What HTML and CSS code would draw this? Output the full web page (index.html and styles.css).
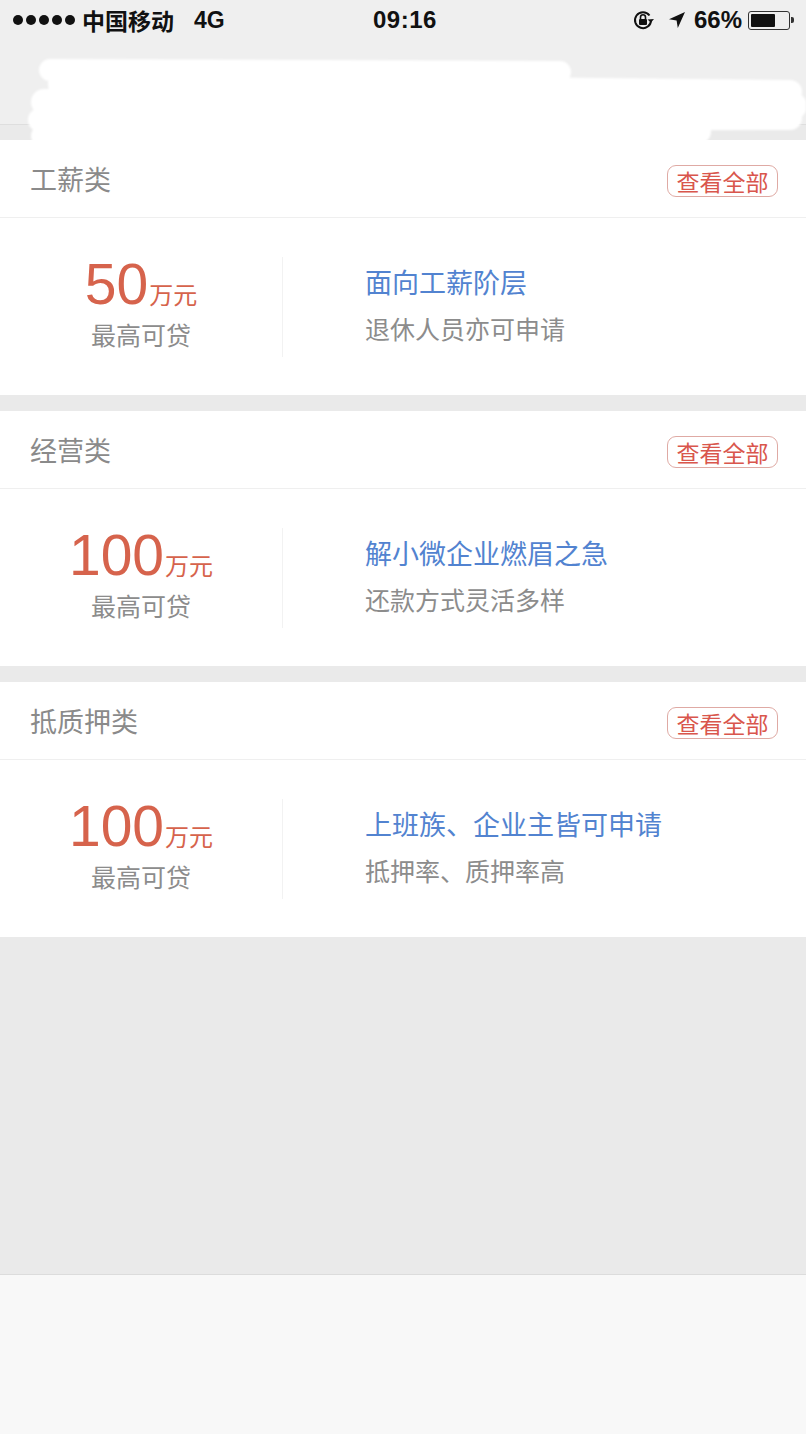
FILE: index.html
```html
<!DOCTYPE html>
<html lang="zh-CN">

    <head>
        <meta charset="UTF-8">
        <meta name="viewport"
            content="width=device-width,initial-scale=1.0">
        <title>贷款分类</title>
        <link rel="stylesheet" href="styles.css">
    </head>

    <body>
        <div class="statusbar">
            <div class="sb-left">
                <span class="dots"><i></i><i></i><i></i><i></i><i></i></span>
                <span>中国移动</span>
                <span class="net">4G</span>
            </div>
            <div class="sb-time">09:16</div>
            <div class="sb-right">
                <svg class="ic-lock" width="22" height="22" viewBox="0 0 22 22">
                    <path d="M17.5 6.5A8 8 0 1 0 19 11" fill="none" stroke="#111" stroke-width="2"/>
                    <path d="M15.5 10.5l3.5 3 3-3.6z" fill="#111"/>
                    <rect x="7" y="10" width="8" height="6" rx="1" fill="#111"/>
                    <path d="M8.5 10V8.3a2.5 2.5 0 0 1 5 0V10" fill="none" stroke="#111" stroke-width="1.6"/>
                </svg>
                <svg class="ic-loc" width="18" height="18" viewBox="0 0 18 18">
                    <path d="M17 1L1 8.2l7.6 1.2L9.8 17z" fill="#111"/>
                </svg>
                <span class="pct">66%</span>
                <span class="battery"><span class="level"></span></span>
                <span class="nub"></span>
            </div>
        </div>

        <div class="topbar">
            <!-- 打码涂白 -->
            <svg class="scribble" width="806" height="110" viewBox="0 0 806 110">
                <g fill="none" stroke="#fff" stroke-linecap="round">
                    <path d="M50 14 L560 16" stroke-width="22"/>
                    <path d="M60 28 L790 36" stroke-width="24"/>
                    <path d="M44 46 L794 50" stroke-width="26"/>
                    <path d="M40 64 L790 62" stroke-width="24"/>
                    <path d="M42 80 L700 76" stroke-width="22"/>
                    <path d="M46 94 L540 90" stroke-width="18"/>
                </g>
            </svg>
        </div>

        <div class="main">
            <div class="card">
                <div class="card-head">
                    <span class="card-title">工薪类</span>
                    <a href="#" class="more">查看全部</a>
                </div>
                <div class="card-body">
                    <div class="amount">
                        <div class="num">50<span class="unit">万元</span></div>
                        <div class="label">最高可贷</div>
                    </div>
                    <div class="desc">
                        <div class="desc-main">面向工薪阶层</div>
                        <div class="desc-sub">退休人员亦可申请</div>
                    </div>
                </div>
            </div>

            <div class="card">
                <div class="card-head">
                    <span class="card-title">经营类</span>
                    <a href="#" class="more">查看全部</a>
                </div>
                <div class="card-body">
                    <div class="amount">
                        <div class="num">100<span class="unit">万元</span></div>
                        <div class="label">最高可贷</div>
                    </div>
                    <div class="desc">
                        <div class="desc-main">解小微企业燃眉之急</div>
                        <div class="desc-sub">还款方式灵活多样</div>
                    </div>
                </div>
            </div>

            <div class="card">
                <div class="card-head">
                    <span class="card-title">抵质押类</span>
                    <a href="#" class="more">查看全部</a>
                </div>
                <div class="card-body">
                    <div class="amount">
                        <div class="num">100<span class="unit">万元</span></div>
                        <div class="label">最高可贷</div>
                    </div>
                    <div class="desc">
                        <div class="desc-main">上班族、企业主皆可申请</div>
                        <div class="desc-sub">抵押率、质押率高</div>
                    </div>
                </div>
            </div>
        </div>

        <div class="footer"></div>
    </body>

</html>
```

FILE: styles.css
```css
* {
    margin: 0;
    padding: 0;
    box-sizing: border-box;
}

body {
    width: 806px;
    height: 1434px;
    display: flex;
    flex-direction: column;
    background-color: #eaeaea;
    font-family: "Liberation Sans", "Noto Sans CJK SC", sans-serif;
    overflow: hidden;
}

a {
    text-decoration: none;
}

/* 状态栏 */
.statusbar {
    height: 40px;
    flex-shrink: 0;
    background: #efefef;
    display: flex;
    align-items: center;
    justify-content: space-between;
    padding: 0 12px 0 13px;
    font-size: 23px;
    font-weight: bold;
    color: #111;
    position: relative;
}

.sb-left {
    display: flex;
    align-items: center;
    gap: 7px;
}

.dots {
    display: flex;
    gap: 3px;
}

.dots i {
    width: 10px;
    height: 10px;
    border-radius: 50%;
    background: #111;
}

.sb-left .net {
    margin-left: 13px;
}

.sb-time {
    position: absolute;
    left: 373px;
    top: 6px;
    font-size: 24px;
    letter-spacing: 0.5px;
}

.sb-right {
    display: flex;
    align-items: center;
    gap: 6px;
}

.ic-lock {
    margin-right: 8px;
}

.ic-loc {
    margin-right: 2px;
}

.pct {
    font-size: 24px;
}

.battery {
    width: 42px;
    height: 19px;
    border: 1.5px solid #333;
    border-radius: 3px;
    padding: 2px;
    display: flex;
}

.battery .level {
    width: 66%;
    background: #111;
    border-radius: 1px;
}

.nub {
    width: 3px;
    height: 6px;
    background: #333;
    margin-left: -5px;
    border-radius: 0 2px 2px 0;
}

/* 顶部标题（已打码） */
.topbar {
    height: 85px;
    flex-shrink: 0;
    background: #efefef;
    border-bottom: 1px solid #dedede;
    position: relative;
}

.scribble {
    position: absolute;
    left: 0;
    top: 16px;
    filter: blur(1px);
}

/* 列表 */
.main {
    flex: 1;
    padding-top: 15px;
    display: flex;
    flex-direction: column;
    gap: 16px;
    border-bottom: 1px solid #dcdcdc;
}

.card {
    background: #fff;
}

.card-head {
    height: 78px;
    display: flex;
    align-items: center;
    justify-content: space-between;
    padding: 0 28px 0 30px;
    border-bottom: 1px solid #efefef;
}

.card-title {
    font-size: 27px;
    color: #8a8a8a;
}

.more {
    width: 111px;
    height: 32px;
    display: flex;
    align-items: center;
    justify-content: center;
    border: 1px solid #dfaaa4;
    border-radius: 9px;
    font-size: 23px;
    color: #d9564c;
    margin-top: 4px;
}

.card-body {
    height: 177px;
    display: flex;
    align-items: center;
}

.amount {
    width: 283px;
    height: 100px;
    border-right: 1px solid #f2f2f2;
    display: flex;
    flex-direction: column;
    align-items: center;
    justify-content: center;
}

.num {
    font-size: 57px;
    line-height: 60px;
    color: #d6634c;
    margin-top: -8px;
}

.unit {
    font-size: 24px;
    margin-left: 1px;
}

.label {
    font-size: 25px;
    color: #8c8c8c;
    line-height: 30px;
    margin-top: -5px;
}

.desc {
    padding-left: 82px;
    display: flex;
    flex-direction: column;
    gap: 14px;
    margin-top: -2px;
}

.desc-main {
    font-size: 27px;
    color: #5283d0;
    line-height: 34px;
}

.desc-sub {
    font-size: 25px;
    color: #8c8c8c;
    line-height: 30px;
}

/* 底部 */
.footer {
    height: 159px;
    flex-shrink: 0;
    background: #f8f8f8;
}
```
